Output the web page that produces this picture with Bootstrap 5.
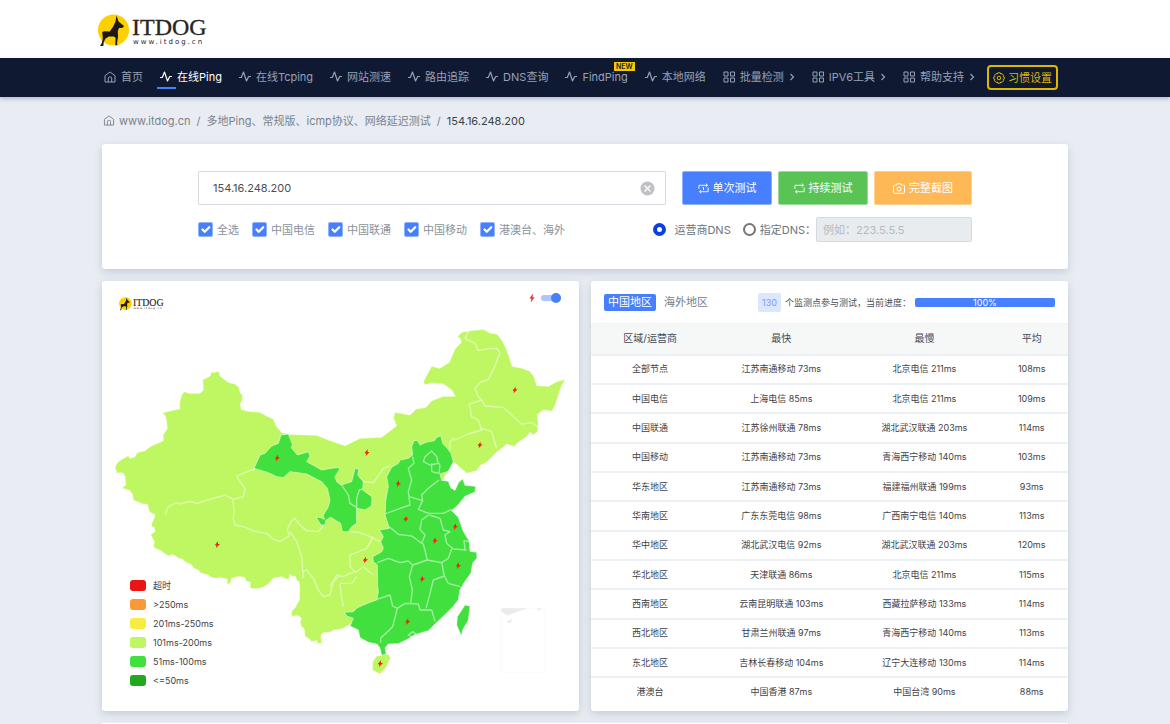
<!DOCTYPE html>
<html lang="zh-CN">
<head>
<meta charset="utf-8">
<meta name="viewport" content="width=device-width, initial-scale=1">
<title>在线Ping - ITDOG</title>
<link rel="stylesheet" href="https://cdn.jsdelivr.net/npm/bootstrap@5.3.0/dist/css/bootstrap.min.css">
<style>
:root{--ink:#4a4f57;--muted-ink:#6c757d;--blue:#467fff;--gold:#f5cb00}
body{background:#e9edf3;color:var(--ink);font:11px/16px Inter,"Noto Sans CJK SC",sans-serif}
svg{display:block;flex:none}
.site-wrap{width:100%;max-width:966px;margin:0 auto}
.site-head{height:58px;background:#fff}
.brand-link{width:112px;margin-left:-4px}
.main-nav{background:#0f1932;min-height:39px;box-shadow:0 2px 4px rgba(60,70,100,.3)}
.main-nav .site-wrap{gap:17px;height:39px;padding-left:2px}
.main-nav a{color:#97a1b5;text-decoration:none;gap:5px;white-space:nowrap;height:39px;padding-bottom:2px;position:relative}
.main-nav a.current{color:#fff}
.main-nav a.current::after{content:"";position:absolute;left:-3px;bottom:8px;width:19px;height:2px;background:var(--blue)}
.new-tag{position:absolute;right:-7px;top:4px;background:var(--gold);color:#1c2233;font:600 7px/9px Inter,sans-serif;padding:0 2px}
.prefs-btn{border:2px solid #dcb800;border-radius:4px;background:none;color:#dcb800;font-size:11px;line-height:16px;height:25px;gap:3px;padding:0 4px;margin-left:-5px;white-space:nowrap}
.crumbs{height:47px;color:#7a828c;padding-left:1px}
.crumbs a{color:inherit;text-decoration:none}
.crumbs .sep{padding:0 6px}
.crumbs .here{color:#3c4148}
.panel{background:#fff;border:0;border-radius:3px;box-shadow:0 3px 8px rgba(120,132,156,.32)}
.query{padding:27px 96px}
.host-box{position:relative;flex:1}
.host-box input{height:34px;border:1px solid #d5d9e0;border-radius:2px;font-size:11px;color:var(--ink);padding:0 14px}
.clear-btn{position:absolute;right:11px;top:10px;border:0;background:none;padding:0}
.acts{gap:6px}
.act{height:34px;border-radius:2px;border:1px solid;color:#fff;font-size:11px;width:90px;gap:4px;padding:0}
.act-once{background:#467fff;border-color:#8fb2ff}
.act-loop{background:#5ac355;border-color:#9adb97}
.act-shot{background:#ffb856;border-color:#ffd08d;width:98px}
.ticks{gap:13px}
.tick{width:15px;height:15px;margin:0;border-radius:2px!important;border-color:#8fb2ff;flex:none}
.tick:checked{background-color:var(--blue);border-color:#8fb2ff;background-size:15px 15px}
.opt{gap:4px;color:#8b929c;white-space:nowrap}
.dns-row{color:#6c757d}
.dot{appearance:none;width:13px;height:13px;border:2px solid #767676;border-radius:50%;background:#fff;margin:0;flex:none}
.dot:checked{border:4px solid #0b3fe0}
.dns-box{width:156px;height:25px;border:1px solid #d5dae1;border-radius:2px;background:#e9ecef;font-size:11px;padding:0 6px}
.dns-box::placeholder{color:#b3b9c1}
.panels{gap:12px;margin-top:12px}
.panels>*{flex:1 1 0;min-width:0}
.map-panel{position:relative}
.map-art{width:100%;height:auto}
.map-brand{position:absolute;left:17px;top:16px;width:46px}
.map-switch{position:absolute;right:18px;top:12px;gap:6px}
.slide{appearance:none;width:20px;height:6px;margin:0;border-radius:4px;background:#aac5ff;position:relative}
.slide::after{content:"";position:absolute;right:0;top:-2px;width:10px;height:10px;border-radius:50%;background:var(--blue)}
.key-list{position:absolute;left:28px;bottom:25px;font-size:9px;line-height:11px;gap:8px;padding:0;margin:0;list-style:none;color:#3f4247}
.key-list li{display:flex;align-items:center;gap:7px;height:11px}
.key-list i{width:16px;height:11px;border-radius:3px}
.k1{background:#ec1515}.k2{background:#fb9938}.k3{background:#f7ec42}.k4{background:#bef761}.k5{background:#42e03f}.k6{background:#20a91c}
.stat-head{height:42px;padding:0 13px;white-space:nowrap}
.stat-note{font-size:9px;margin-left:auto}
.region{border:0;background:none;color:#767d87;font-size:11px;line-height:17px;padding:0 4px;border-radius:2px}
.region.on{background:var(--blue);color:#fff}
.count{background:#dbe6ff;color:#7a9ff5;border-radius:2px;font-size:9px;line-height:19px;padding:0 4px}
.done-bar{flex:0 0 140px;height:9px;border-radius:2px}
.done-bar .progress-bar{background:var(--blue);font-size:9px;line-height:9px}
.stats{table-layout:fixed;height:382px;margin:0;text-align:center;font-size:9px;line-height:13px;color:#3f4247}
.stats th,.stats td{padding:0 1px 1px 0;vertical-align:middle;white-space:nowrap;border:0;color:inherit;font-weight:400}
.stats tbody td{border-top:2px solid #edf1f6}
.stats thead th{background:#f6f7f7;height:31px;font-size:10px;border-top:1px solid #f1f2f4;color:#3f4a54}
</style>
<script src="https://cdn.jsdelivr.net/npm/bootstrap@5.3.0/dist/js/bootstrap.bundle.min.js"></script>
</head>
<body class="min-vh-100 d-flex flex-column">
<svg width="0" height="0" class="position-absolute" aria-hidden="true">
<defs>
<symbol id="logo" viewBox="0 0 112 34">
<circle cx="15.500" cy="16" r="15.500" fill="#fdd000"/>
<path fill="#1d1815" d="M18.500 1.500l2 6 5.500 4.500-1.300 1.800-3.700.2-1.200 3 .2 6-1 6.500.6 1.800h-2.300l.3-7.500-1.800-1.400-5 0-3.500 2.400-1.700 4-.2 3.200H2l1.800-3 1-4.500-.5-6.500 2-.8 5.500.2 3.400-4.800 2.300-5z"/>
<text x="34" y="21" font-family="Liberation Serif, serif" font-size="24" fill="#2a2422" stroke="#2a2422" stroke-width=".3">ITDOG</text>
<text x="35" y="30" font-family="DejaVu Sans, sans-serif" font-size="7" letter-spacing="2" fill="#2a2422">www.itdog.cn</text>
</symbol>
<symbol id="home" viewBox="0 0 12 12"><path d="M1 4.700L6 1l5 3.700V11H1zM4.300 11V7q0-1 1-1h1.400q1 0 1 1v4" fill="none" stroke="currentColor"/></symbol>
<symbol id="pulse" viewBox="0 0 12 12"><path d="M0 6.500h2.300L4.500 1l3 9L9.700 5.500H12" fill="none" stroke="currentColor" stroke-width="1.200" stroke-linejoin="round"/></symbol>
<symbol id="tiles" viewBox="0 0 12 12"><path d="M1 1h4v4H1zM7.500 1h4v4h-4zM1 7h4v4H1zM7.500 7h4v4h-4z" fill="none" stroke="currentColor"/></symbol>
<symbol id="more" viewBox="0 0 6 8"><path d="M1.500 1L4.500 4l-3 3" fill="none" stroke="currentColor" stroke-width="1.200"/></symbol>
<symbol id="bolt" viewBox="0 0 8 12"><path d="M5.500 0L.5 6.600h2.700L2.300 12l5.200-7H4.700z" fill="currentColor"/></symbol>
<symbol id="spark" viewBox="-8 -10 16 20"><path d="M2-10L-8 2h5l-1 8L8-2H2z" fill="#f1280c"/></symbol>
</defs>
</svg>

<header class="site-head">
<div class="site-wrap h-100 d-flex align-items-center">
<a class="brand-link" href="#" aria-label="ITDOG"><svg width="112" height="34" class="mt-1"><use href="#logo"/></svg></a>
</div>
</header>

<nav class="main-nav">
<div class="site-wrap d-flex align-items-center">
<a class="d-flex align-items-center" href="#"><svg width="12" height="12"><use href="#home"/></svg>首页</a>
<a class="d-flex align-items-center current" href="#"><svg width="12" height="12"><use href="#pulse"/></svg>在线Ping</a>
<a class="d-flex align-items-center" href="#"><svg width="12" height="12"><use href="#pulse"/></svg>在线Tcping</a>
<a class="d-flex align-items-center" href="#"><svg width="12" height="12"><use href="#pulse"/></svg>网站测速</a>
<a class="d-flex align-items-center" href="#"><svg width="12" height="12"><use href="#pulse"/></svg>路由追踪</a>
<a class="d-flex align-items-center" href="#"><svg width="12" height="12"><use href="#pulse"/></svg>DNS查询</a>
<a class="d-flex align-items-center" href="#"><svg width="12" height="12"><use href="#pulse"/></svg>FindPing<span class="new-tag">NEW</span></a>
<a class="d-flex align-items-center" href="#"><svg width="12" height="12"><use href="#pulse"/></svg>本地网络</a>
<a class="d-flex align-items-center" href="#"><svg width="12" height="12"><use href="#tiles"/></svg>批量检测<svg width="6" height="8"><use href="#more"/></svg></a>
<a class="d-flex align-items-center" href="#"><svg width="12" height="12"><use href="#tiles"/></svg>IPV6工具<svg width="6" height="8"><use href="#more"/></svg></a>
<a class="d-flex align-items-center" href="#"><svg width="12" height="12"><use href="#tiles"/></svg>帮助支持<svg width="6" height="8"><use href="#more"/></svg></a>
<button type="button" class="prefs-btn d-flex align-items-center"><svg width="12" height="12" viewBox="0 0 12 12" fill="none" stroke="currentColor"><path d="M4.800.8h2.400l.5 1.200 1.300-.3 1.500 1.600-.5 1.200 1.300.6v1.800l-1.300.6.5 1.300L9 10.300 7.700 10l-.5 1.200H4.800L4.300 10l-1.300.3-1.500-1.500L2 7.500.7 6.900V5.100L2 4.500l-.5-1.200L3 1.700l1.300.3z"/><circle cx="6" cy="6" r="1.800"/></svg>习惯设置</button>
</div>
</nav>

<main class="site-wrap d-flex flex-column flex-grow-1">
<nav class="crumbs d-flex align-items-center" aria-label="breadcrumb">
<svg width="12" height="11" class="me-1"><use href="#home"/></svg><a href="#">www.itdog.cn</a><span class="sep">/</span><a href="#">多地Ping、常规版、icmp协议、网络延迟测试</a><span class="sep">/</span><span class="here">154.16.248.200</span>
</nav>

<form class="panel query">
<div class="d-flex">
<div class="host-box me-3"><input class="form-control" type="text" value="154.16.248.200" aria-label="测试地址">
<button type="button" class="clear-btn" aria-label="清除"><svg width="15" height="15" viewBox="0 0 15 15"><circle cx="7.500" cy="7.500" r="7" fill="#bfc1c5"/><path d="M4.500 4.500l6 6M10.500 4.500l-6 6" stroke="#fff" stroke-width="1.300"/></svg></button></div>
<div class="acts d-flex">
<button type="button" class="btn act act-once d-flex align-items-center justify-content-center"><svg width="11" height="11" viewBox="0 0 12 12" fill="none" stroke="currentColor"><path d="M1 6.500V2.500h9M8.500.7l2 1.800-2 1.700M11 5v4.500H2M3.500 7.700l-2 1.800 2 1.700M5 4.800h1v3"/></svg>单次测试</button>
<button type="button" class="btn act act-loop d-flex align-items-center justify-content-center"><svg width="11" height="11" viewBox="0 0 12 12" fill="none" stroke="currentColor"><path d="M1 6.500V2.500h9M8.500.7l2 1.800-2 1.700M11 5v4.500H2M3.500 7.700l-2 1.800 2 1.700"/></svg>持续测试</button>
<button type="button" class="btn act act-shot d-flex align-items-center justify-content-center"><svg width="12" height="11" viewBox="0 0 12 11" fill="none" stroke="currentColor"><path d="M.5 3q0-.8.8-.8h2L4 .8h4l.7 1.400h2q.8 0 .8.800v6.500q0 .800-.8.800H1.300q-.8 0-.8-.8z"/><circle cx="6" cy="6" r="2"/></svg>完整截图</button>
</div>
</div>
<div class="d-flex align-items-center justify-content-between mt-2 pt-1">
<div class="ticks d-flex">
<label class="opt d-flex align-items-center"><input class="form-check-input tick" type="checkbox" checked>全选</label>
<label class="opt d-flex align-items-center"><input class="form-check-input tick" type="checkbox" checked>中国电信</label>
<label class="opt d-flex align-items-center"><input class="form-check-input tick" type="checkbox" checked>中国联通</label>
<label class="opt d-flex align-items-center"><input class="form-check-input tick" type="checkbox" checked>中国移动</label>
<label class="opt d-flex align-items-center"><input class="form-check-input tick" type="checkbox" checked>港澳台、海外</label>
</div>
<div class="dns-row d-flex align-items-center text-nowrap">
<label class="d-flex align-items-center me-2 pe-1"><input class="dot me-2" type="radio" name="dns" checked>运营商DNS</label>
<label class="d-flex align-items-center"><input class="dot me-1" type="radio" name="dns">指定DNS：</label>
<input class="form-control dns-box" type="text" placeholder="例如：223.5.5.5" aria-label="指定DNS地址" disabled>
</div>
</div>
</form>

<div class="panels d-flex">
<section class="panel map-panel">
<svg class="map-art" viewBox="6 3 1431 1290" role="img" aria-label="中国各省延迟地图">
<g stroke="#fff" stroke-opacity=".55" stroke-width="3" stroke-linejoin="round">
<path fill="#bef761" d="M335 275l8 3 8-4 6 1 3 13 15 12 10 7 20 5 12 10 3 16 8 7-1 15-6 12 3 16 16 5 40 4 20 11 20 9 10 23 16 18 19 4 25 2 60 2 20 8 30 11 35 12 45-22 65-3 45-35-10-23 5-17 45 8 18-18 30-5 17-20 35-13h36l-11-19-25-18-35-3-20 6-5-10 15-28 10-18 25 6 28-18 17-40 19-20-4-13-8-4 13-13 25-5 40-4 20 11 20 3 15 17 12 23 13 35 6 22 29 5 25 10 13 18 7 25 35 2 25-14 26-7-11 19-10 30-10 30-10 17-25-4-18 14 3 28-2 23-13 10-10-8-10 13-25 17-13 13-22-8-10 10-20 15-30 30-20 10-10 15-30 8L1060 545L1000 650L1000 1000L760 1020L750 1033L730 1045L716 1049 700 1050 695 1055 680 1058 672 1056 663 1065 665 1090 655 1091 650 1082 635 1085 628 1076 615 1070 612 1045 604 1040 600 1025 604 1016 598 1008 585 1007 575 1010 574 998 577 990 584 985 598 960 599 925 597 905 590 900 585 888 578 890 570 882 566 898 556 896 545 890 520 895 505 912 490 922 473 926 455 926 450 920 451 907 438 903 434 892 420 890 405 892 395 895 392 907 385 915 381 907 382 898 362 893 345 895 335 893 325 885 312 882 300 878 295 870 280 864 275 855 255 845 248 838 235 835 230 830 218 824 205 828 190 818 183 812 165 805 160 797 163 785 152 765 158 759 165 755 163 743 155 740 155 730 160 720 165 705 150 697 145 685 142 673 128 672 100 660 98 645 90 632 79 628 65 625 77 615 75 590 70 580 62 578 50 580 50 574 45 565 47 556 55 545 65 538 85 527 90 535 105 530 110 520 120 515 135 512 150 500 190 482 189 465 202 445 197 410 188 398 235 387 240 387 238 370 245 345 252 335 270 340 300 340 310 330 308 300 330 288z"/>
<path fill="#42e03f" d="M1060 545l-7-25-11-15-14-15-5-23-13 5-7 10-25 5-18 8-8-14-10 1-7 18 3 25-13 10-25 5-5 10-20 12-15 28 5 30-7 35-3 50 13 40-30 5 12 20-8 15 8 20-5 10-27 15 2 15 12 10 1 65 2 15-5 25-15 5-30 12-15 8-10 10-27 2 7 11 20 7-10 23 25 12 5 23 25 14 27 6 8 12 5 22h15l-5-23 10-12 30-1 25-12 25-15 40-12 20-20 25-23 30-30 15-20 5-30 15-25 18-25 5-30 13-15-1-17-20-3-2-30-18-30-15-42-20-20 20-18 20-25 30-13 2-17-32-3-7-20-13 13-10 22-12-7-8-20-20-3-5-19 25-8z"/>
<path fill="#42e03f" d="M543 465l22-3 13 33-5 7 19 23 33-10 5 13-10 17 28 15 17 10 30-5 22-3 1 8-13 20 5 15 13 10 32-10 10-40 12 3-4 17 17 20-2 25 28 20-1 28-20 12-25-5v45l-15 10-10 15h-18l-5-25-17-10-13-8-14 8-3 15h-12l-15-23 12 0 13 6-3-13 15-25 5-20-8-35-17-20-45-23-50-7-20 18-20-3-25-12-43-13 18-40 15-5 20-22 20-8z"/>
<path fill="#42e03f" d="M1095 975l15 3-5 42-17 30-4 18-14-33 2-25z"/>
<path fill="#bef761" d="M818 1145l12-17 35-6 7 11-12 27-20 22-23-12z"/>
</g>
<g fill="none" stroke="#fff" stroke-opacity=".5" stroke-width="4" stroke-linejoin="round">
<path d="M465 567l-30 10-25 11 10 17 15 20-5 25-30 8-25-13-35 10-50 15-20-6-30 8-10-4-25 12-10 25"/>
<path d="M398 658l4 32-2 25 5 20 35 8 20 10 40 7 20 18 20 7 28-17-6-20 10-23 13-10 15 20 20 17 35 3 17-20M570 755l20 30 15 45 3 45 12-5 20 25 15 35 15 20 20-5 10-40 20-20M745 755l35 3 30 12 30 15M820 770l-20 35-50 20v35l15 15M690 920l20-35 20 5 20-10 20-5 20-15 30 25M608 895l2-25M720 910h35l15-20M730 980l-7-40-3-30M790 605l30 3 30-43 20-7M725 615l20 30 5 25 20 12v-27l8-25 10-3"/>
<path d="M1105 155l-10 20 30 15 10 22 30-6 25-1 10 13-18 47-17 33-25 10-15 17 10 25 10 10-37 12 7 38 20 10 10 30-40 12-40 18-5-5-10 10v25M1145 360l10 18 55 4 30 28 25 22 30-4 18 12M1145 445l30 10 15 50"/>
<path d="M995 513l15 17 5 20-25 5-20-10 5-15zM1010 540l10 15-3 25-22-5v-25M938 530l4 20-17 15 10 35-10 35 5 40-30 10-45 17M1017 600l-32 25-20 20 3 17-40-12M968 662l-13 26 30 12h45l25-12M868 740l27 23 40 5 30 22 5 2 12 48 43 8 20-13 10-28M985 705l-20 15-5 28 15 17-10 25M988 705l32 10 10 35 20 5-15 10 5 25 20 17 40 3M832 848l33-13 35 13 25-5 13 12 44-15M938 855l-10 35 9 40-5 40M1025 848l8 40-33 12-10 40-12 45M1033 888l12 22 35 10M830 958l40-13 8 33 14 7 23-15 40 2 5 18h35l10 35M892 985l-14 55-36 35v13M1108 785l-16-3 3 26M925 1065l13-10 10 7-8 10z"/>
</g>
<path d="M1203 985h134v192h-134z" fill="none" stroke="#fafafa" stroke-width="3"/>
<path fill="#ebebeb" d="M1203 985h80l-35 12-25 9-18-9zM1222 1023l16-7-6 12-8 1zM1310 985h12l-3 9z"/>
<g>
<use href="#spark" x="1237" y="320" width="16" height="20"/><use href="#spark" x="1132" y="485" width="16" height="20"/><use href="#spark" x="793" y="508" width="16" height="20"/><use href="#spark" x="524" y="524" width="16" height="20"/><use href="#spark" x="887" y="601" width="16" height="20"/><use href="#spark" x="910" y="707" width="16" height="20"/><use href="#spark" x="1058" y="730" width="16" height="20"/><use href="#spark" x="997" y="772" width="16" height="20"/><use href="#spark" x="1067" y="847" width="16" height="20"/><use href="#spark" x="788" y="830" width="16" height="20"/><use href="#spark" x="959" y="887" width="16" height="20"/><use href="#spark" x="915" y="1015" width="16" height="20"/><use href="#spark" x="833" y="1141" width="16" height="20"/><use href="#spark" x="344" y="784" width="16" height="20"/>
</g>
</svg>
<svg class="map-brand" viewBox="0 0 112 34"><use href="#logo" width="112" height="34"/></svg>
<label class="map-switch d-flex align-items-center" aria-label="显示标记"><svg width="6" height="10" class="text-danger"><use href="#bolt"/></svg><input class="slide" type="checkbox" checked></label>
<ul class="key-list d-flex flex-column">
<li><i class="k1"></i>超时</li><li><i class="k2"></i>&gt;250ms</li><li><i class="k3"></i>201ms-250ms</li><li><i class="k4"></i>101ms-200ms</li><li><i class="k5"></i>51ms-100ms</li><li><i class="k6"></i>&lt;=50ms</li>
</ul>
</section>

<section class="panel">
<div class="stat-head d-flex align-items-center">
<button type="button" class="region on">中国地区</button><button type="button" class="region ms-1">海外地区</button>
<span class="stat-note"><span class="count d-inline-block me-1">130</span>个监测点参与测试，当前进度：</span>
<div class="progress done-bar ms-1"><div class="progress-bar w-100" role="progressbar" aria-valuenow="100" aria-valuemin="0" aria-valuemax="100">100%</div></div>
</div>
<table class="table stats">
<colgroup><col style="width:25%"><col style="width:30%"><col style="width:30%"><col style="width:15%"></colgroup>
<thead><tr><th>区域/运营商</th><th>最快</th><th>最慢</th><th>平均</th></tr></thead>
<tbody>
<tr><td>全部节点</td><td>江苏南通移动 73ms</td><td>北京电信 211ms</td><td>108ms</td></tr>
<tr><td>中国电信</td><td>上海电信 85ms</td><td>北京电信 211ms</td><td>109ms</td></tr>
<tr><td>中国联通</td><td>江苏徐州联通 78ms</td><td>湖北武汉联通 203ms</td><td>114ms</td></tr>
<tr><td>中国移动</td><td>江苏南通移动 73ms</td><td>青海西宁移动 140ms</td><td>103ms</td></tr>
<tr><td>华东地区</td><td>江苏南通移动 73ms</td><td>福建福州联通 199ms</td><td>93ms</td></tr>
<tr><td>华南地区</td><td>广东东莞电信 98ms</td><td>广西南宁电信 140ms</td><td>113ms</td></tr>
<tr><td>华中地区</td><td>湖北武汉电信 92ms</td><td>湖北武汉联通 203ms</td><td>120ms</td></tr>
<tr><td>华北地区</td><td>天津联通 86ms</td><td>北京电信 211ms</td><td>115ms</td></tr>
<tr><td>西南地区</td><td>云南昆明联通 103ms</td><td>西藏拉萨移动 133ms</td><td>114ms</td></tr>
<tr><td>西北地区</td><td>甘肃兰州联通 97ms</td><td>青海西宁移动 140ms</td><td>113ms</td></tr>
<tr><td>东北地区</td><td>吉林长春移动 104ms</td><td>辽宁大连移动 130ms</td><td>114ms</td></tr>
<tr><td>港澳台</td><td>中国香港 87ms</td><td>中国台湾 90ms</td><td>88ms</td></tr>
</tbody>
</table>
</section>
</div>
<div class="panel flex-grow-1" style="margin-top:12px"></div>
</main>
</body>
</html>
